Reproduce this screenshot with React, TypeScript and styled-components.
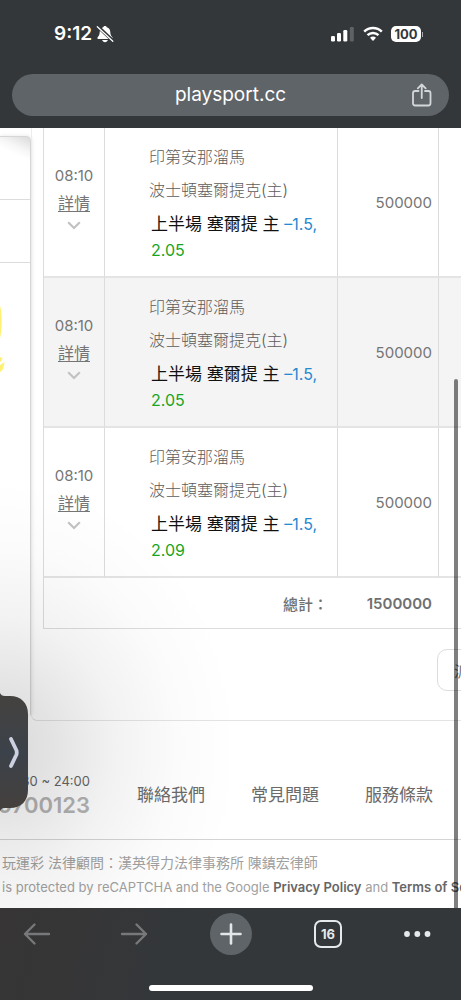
import React from "react";
import styled, { createGlobalStyle } from "styled-components";

const GlobalStyle = createGlobalStyle`
  * { box-sizing: border-box; }
  body { margin: 0; background: #33373a; font-family: Inter, "Noto Sans CJK TC", sans-serif; }
  button { font: inherit; border: 0; padding: 0; background: none; color: inherit; cursor: pointer; }
  svg { display: block; }
`;

const Screen = styled.div`
  min-height: 100vh;
  display: flex;
  flex-direction: column;
  overflow: hidden;
`;

const TopChrome = styled.header`
  background: #33373a;
  color: #fff;
  padding: 0 12px 12px;
`;

const StatusBar = styled.div`
  height: 74px;
  padding: 0 26px 6px 42px;
  display: flex;
  align-items: center;
  justify-content: space-between;
`;

const StatusGroup = styled.div<{ $gap: number }>`
  display: flex;
  align-items: center;
  gap: ${(p) => p.$gap}px;
`;

const Clock = styled.time`
  font-size: 19px;
  font-weight: 600;
  line-height: 24px;
`;

const Battery = styled.div`
  display: flex;
  align-items: center;
  gap: 1px;
  &::after {
    content: "";
    width: 1px;
    height: 5px;
    background: #aaadae;
  }
`;

const BatteryLevel = styled.span`
  width: 30px;
  height: 16px;
  border-radius: 5px;
  background: #fff;
  color: #33373a;
  font-size: 13px;
  font-weight: 700;
  line-height: 16px;
  text-align: center;
`;

const AddressBar = styled.div`
  height: 42px;
  border-radius: 21px;
  background: #5f6468;
  padding: 0 17px;
  display: grid;
  grid-template-columns: 20px 1fr 20px;
  align-items: center;
`;

const Address = styled.button`
  grid-column: 2;
  font-size: 19px;
  line-height: 24px;
`;

const WebPage = styled.main`
  flex: 1;
  position: relative;
  overflow: hidden;
  background: #fff;
`;

const Columns = styled.div`
  display: flex;
`;

const SideCard = styled.aside`
  flex: 0 0 31px;
  margin: 8px 0 6px;
  border-top: 1px solid #d6d6d6;
  border-right: 1px solid #d6d6d6;
  border-top-right-radius: 5px;
  box-shadow: 1px 0 4px rgba(0, 0, 0, 0.1);
  background: linear-gradient(205deg, #dadada 0, #f6f6f6 14px, #fff 22px);
`;

const SideItem = styled.div`
  height: 63px;
  border-bottom: 1px solid #dcdcdc;
`;

const SideArt = styled.svg`
  margin-top: 42px;
`;

const Panel = styled.section`
  flex: 1 0 auto;
  padding: 0 0 29px 11px;
  border-left: 1px solid #ececec;
  border-bottom: 1px solid #e4e4e4;
  border-bottom-left-radius: 6px;
`;

const BetTable = styled.table`
  table-layout: fixed;
  width: 597px;
  border-spacing: 0;
  border-left: 1px solid #dcdcdc;
  color: #757575;
  font-size: 15px;
`;

const BetRow = styled.tr<{ $shaded: boolean }>`
  height: 150px;
  background: ${(p) => (p.$shaded ? "#f4f4f4" : "transparent")};
`;

const Cell = styled.td`
  padding: 0;
  border-right: 1px solid #dcdcdc;
  border-bottom: 2px solid #e4e4e4;
`;

const TimeBox = styled.div`
  padding-bottom: 8px;
  display: flex;
  flex-direction: column;
  align-items: center;
  line-height: 24px;
`;

const DetailLink = styled.a`
  color: inherit;
  font-size: 16px;
  line-height: 30px;
  text-underline-offset: 2px;
`;

const ChevronBox = styled.div`
  height: 14px;
  display: flex;
  align-items: center;
`;

const GameCell = styled(Cell)`
  vertical-align: top;
  padding: 13px 0 0 44px;
  color: #5c5c5c;
  font-size: 16px;
  font-weight: 300;
`;

const Team = styled.div`
  line-height: 33px;
`;

const Pick = styled.div`
  padding: 4px 0 0 2px;
  color: #111;
  font-size: 17px;
  font-weight: 400;
  line-height: 26px;
`;

const PickNumber = styled.span<{ $tone: "handicap" | "odds" }>`
  display: ${(p) => (p.$tone === "odds" ? "block" : "inline")};
  color: ${(p) => (p.$tone === "odds" ? "#17a51f" : "#2489d0")};
  font-size: 16px;
`;

const AmountCell = styled(Cell)`
  padding-right: 6px;
  text-align: right;
`;

const TotalCell = styled.td`
  height: 51px;
  padding: 0 7px 0 0;
  border-bottom: 1px solid #dcdcdc;
  color: #707070;
  font-weight: 600;
  text-align: right;
`;

const TotalLabel = styled(TotalCell)`
  padding-right: 10px;
  font-weight: 500;
`;

const PanelButton = styled.button`
  display: block;
  width: 120px;
  height: 42px;
  margin: 20px 0 0 394px;
  padding-left: 16px;
  border: 1px solid #dcdcdc;
  border-radius: 10px;
  color: #707070;
  font-size: 16px;
  text-align: left;
`;

const FooterTop = styled.div`
  display: flex;
  align-items: center;
  gap: 47px;
  padding: 48px 0 22px;
  border-bottom: 1px solid #d4d4d4;
`;

const Contact = styled.div`
  flex: 0 0 90px;
  min-width: 0;
  display: flex;
  flex-direction: column;
  align-items: flex-end;
  line-height: 24px;
  white-space: nowrap;
`;

const Hours = styled.span`
  color: #666;
  font-size: 13px;
`;

const Phone = styled.span`
  color: #b4b4b4;
  font-size: 22px;
  font-weight: 600;
`;

const FooterNav = styled.nav`
  display: flex;
  gap: 46px;
  font-size: 17px;
  white-space: nowrap;
  a { color: #6a6a6a; text-decoration: none; }
`;

const Legal = styled.div`
  padding: 10px 0 8px 2px;
  color: #a0a0a0;
  font-size: 13px;
  line-height: 25px;
  white-space: nowrap;
  a { color: #666; font-weight: 600; text-decoration: none; }
`;

const Counsel = styled.div`
  font-size: 14px;
`;

const Haze = styled.div`
  position: absolute;
  inset: 0;
  pointer-events: none;
  background: radial-gradient(
    240px 270px at 0 620px,
    rgba(0, 0, 0, 0.15) 0,
    rgba(0, 0, 0, 0.11) 22%,
    rgba(0, 0, 0, 0.05) 48%,
    rgba(0, 0, 0, 0.015) 74%,
    transparent 100%
  );
`;

const ScrollThumb = styled.div`
  position: absolute;
  top: 251px;
  right: 3px;
  bottom: 0;
  width: 4px;
  border-radius: 2px 2px 0 0;
  background: rgba(0, 0, 0, 0.5);
`;

const Drawer = styled.button`
  position: absolute;
  left: 0;
  top: 565px;
`;

const BottomChrome = styled.footer`
  background: linear-gradient(105deg, #373536 0, #363637 80px, #33373a 190px);
  height: 92px;
  display: flex;
  flex-direction: column;
  align-items: center;
`;

const Toolbar = styled.nav`
  width: 100%;
  padding: 5px 15px 0 16px;
  display: flex;
  justify-content: space-between;
`;

const ToolButton = styled.button<{ $fill?: boolean; $start?: boolean }>`
  width: 42px;
  height: 42px;
  border-radius: 50%;
  display: flex;
  align-items: center;
  justify-content: ${(p) => (p.$start ? "flex-start" : "center")};
  background: ${(p) => (p.$fill ? "#5f6468" : "none")};
`;

const TabCount = styled.span`
  width: 28px;
  height: 28px;
  border: 2px solid #e6e9eb;
  border-radius: 7px;
  color: #e6e9eb;
  font-size: 13px;
  font-weight: 700;
  line-height: 24px;
  text-align: center;
`;

const HomeIndicator = styled.div`
  width: 164px;
  height: 6px;
  margin-top: 30px;
  flex: none;
  border-radius: 3px;
  background: #fff;
`;

const BellOff = () => (
  <svg width="18" height="18" viewBox="0 0 18 18" aria-hidden="true">
    <path d="M9 1C8 1 7.400 1.600 7.200 2.300C4.800 3 3.800 4.900 3.700 7.200C3.600 10.100 2.700 10.800 1.800 11.900C1 12.900 1.500 14 2.700 14H15.300C16.500 14 17 12.900 16.200 11.900C15.300 10.800 14.400 10.100 14.300 7.200C14.200 4.900 13.200 3 10.800 2.300C10.600 1.600 10 1 9 1Z" fill="#fff" />
    <path d="M6.200 15H11.800C11.400 16.400 10.400 17.200 9 17.200S6.600 16.400 6.200 15Z" fill="#fff" />
    <path d="M1.500 1.200L17.200 16" stroke="#33373a" strokeWidth="3.400" />
    <path d="M1.300 1.800L16.800 16.300" stroke="#fff" strokeWidth="1.300" strokeLinecap="round" />
  </svg>
);

const Signal = () => (
  <svg width="24" height="16" viewBox="0 0 24 16" aria-hidden="true">
    <g fill="#fff">
      <rect x="0" y="10" width="4" height="5.500" rx="1.200" />
      <rect x="6" y="7" width="4" height="8.500" rx="1.200" />
      <rect x="12.300" y="4" width="4" height="11.500" rx="1.200" />
      <rect x="18.800" y="1" width="4" height="14.500" rx="1.200" opacity=".22" />
    </g>
  </svg>
);

const Wifi = () => (
  <svg width="20" height="16" viewBox="0 0 20 16" aria-hidden="true">
    <g fill="none" stroke="#fff" strokeWidth="2.500">
      <path d="M1.200 5.600C6.100 .9 13.900 .9 18.800 5.600" />
      <path d="M4.500 9.200C7.600 6.300 12.400 6.300 15.500 9.200" />
    </g>
    <path d="M7 11.700C8.700 10.200 11.300 10.200 13 11.700L10 14.900Z" fill="#fff" />
  </svg>
);

const Share = () => (
  <svg width="20" height="24" viewBox="0 0 20 24" fill="none" stroke="#d4d7d9" strokeWidth="1.800" strokeLinecap="round" strokeLinejoin="round" aria-hidden="true">
    <path d="M6.500 8H3.200C1.900 8 1 8.900 1 10.200V20.300C1 21.600 1.900 22.500 3.200 22.500H16.300C17.600 22.500 18.500 21.600 18.500 20.300V10.200C18.500 8.900 17.600 8 16.300 8H13" />
    <path d="M9.750 15V1.700M5.800 5.400L9.750 1.500L13.700 5.400" />
  </svg>
);

const Arrow = ({ forward }: { forward?: boolean }) => (
  <svg width="28" height="24" viewBox="0 0 28 24" fill="none" stroke="#76787a" strokeWidth="2.400" strokeLinecap="round" strokeLinejoin="round" aria-hidden="true">
    <path d={forward ? "M2 12H26M16.500 2.500L26 12L16.500 21.500" : "M26 12H2M11.500 2.500L2 12L11.500 21.500"} />
  </svg>
);

const bets = [
  { odds: "2.05", shaded: false },
  { odds: "2.05", shaded: true },
  { odds: "2.09", shaded: false },
];

export default function App() {
  return (
    <Screen>
      <GlobalStyle />
      <TopChrome>
        <StatusBar>
          <StatusGroup $gap={4}>
            <Clock>9:12</Clock>
            <BellOff />
          </StatusGroup>
          <StatusGroup $gap={8}>
            <Signal />
            <Wifi />
            <Battery>
              <BatteryLevel>100</BatteryLevel>
            </Battery>
          </StatusGroup>
        </StatusBar>
        <AddressBar>
          <Address type="button">playsport.cc</Address>
          <button type="button" aria-label="Share">
            <Share />
          </button>
        </AddressBar>
      </TopChrome>

      <WebPage>
        <Columns>
          <SideCard>
            <SideItem />
            <SideItem />
            <SideArt width="6" height="70" viewBox="0 0 6 70" aria-hidden="true">
              <path d="M0 1C2.200 6 2.200 26 0 33Z" fill="#fff176" />
              <path d="M0 52L2.500 53L1.500 56L0 57ZM0 60L4.500 57C4 63 2.500 66 0 67Z" fill="#fff176" />
            </SideArt>
          </SideCard>
          <Panel>
            <BetTable>
              <colgroup>
                <col style={{ width: 61 }} />
                <col style={{ width: 233 }} />
                <col style={{ width: 101 }} />
                <col />
              </colgroup>
              <tbody>
                {bets.map((bet, i) => (
                  <BetRow key={i} $shaded={bet.shaded}>
                    <Cell>
                      <TimeBox>
                        <span>08:10</span>
                        <DetailLink href="#">詳情</DetailLink>
                        <ChevronBox>
                          <svg width="14" height="9" viewBox="0 0 14 9" fill="none" stroke="#c2c2c2" strokeWidth="2.200" aria-hidden="true">
                            <path d="M1.200 1.200L7 7L12.800 1.200" />
                          </svg>
                        </ChevronBox>
                      </TimeBox>
                    </Cell>
                    <GameCell>
                      <Team>印第安那溜馬</Team>
                      <Team>波士頓塞爾提克(主)</Team>
                      <Pick>
                        上半場 塞爾提 主 <PickNumber $tone="handicap">–1.5,</PickNumber>
                        <PickNumber $tone="odds">{bet.odds}</PickNumber>
                      </Pick>
                    </GameCell>
                    <AmountCell>500000</AmountCell>
                    <Cell />
                  </BetRow>
                ))}
                <tr>
                  <TotalLabel colSpan={2}>總計：</TotalLabel>
                  <TotalCell>1500000</TotalCell>
                  <TotalCell />
                </tr>
              </tbody>
            </BetTable>
            <PanelButton type="button">派</PanelButton>
          </Panel>
        </Columns>

        <FooterTop>
          <Contact>
            <Hours>08:30 ~ 24:00</Hours>
            <Phone>0700123</Phone>
          </Contact>
          <FooterNav>
            <a href="#">聯絡我們</a>
            <a href="#">常見問題</a>
            <a href="#">服務條款</a>
          </FooterNav>
        </FooterTop>
        <Legal>
          <Counsel>玩運彩 法律顧問：漢英得力法律事務所 陳鎮宏律師</Counsel>
          <div>
            is protected by reCAPTCHA and the Google <a href="#">Privacy Policy</a> and <a href="#">Terms of Service</a>
          </div>
        </Legal>

        <Haze />
        <ScrollThumb />
        <Drawer type="button" aria-label="Open drawer">
          <svg width="29" height="120" viewBox="0 0 29 120" aria-hidden="true">
            <defs>
              <linearGradient id="drawerFill" x1="0" y1="0" x2="0" y2="1">
                <stop offset="0" stopColor="#45423f" />
                <stop offset=".5" stopColor="#3c424a" />
                <stop offset="1" stopColor="#45403d" />
              </linearGradient>
            </defs>
            <path d="M0 0C1 2 2 3 5 3H10C21 3 28 10 28 21V97C28 108 21 115 10 115H5C2 115 1 116 0 118Z" fill="url(#drawerFill)" />
            <path d="M11 46L16.500 57.500Q17 59.500 16.500 61.500L11 73" fill="none" stroke="#ccd0e0" strokeWidth="3.800" strokeLinecap="round" strokeLinejoin="round" />
          </svg>
        </Drawer>
      </WebPage>

      <BottomChrome>
        <Toolbar aria-label="Browser">
          <ToolButton type="button" aria-label="Back">
            <Arrow />
          </ToolButton>
          <ToolButton type="button" aria-label="Forward">
            <Arrow forward />
          </ToolButton>
          <ToolButton type="button" aria-label="New tab" $fill>
            <svg width="22" height="22" viewBox="0 0 22 22" stroke="#e3e6e8" strokeWidth="2.600" strokeLinecap="round" aria-hidden="true">
              <path d="M11 1.500V20.500M1.500 11H20.500" />
            </svg>
          </ToolButton>
          <ToolButton type="button" aria-label="Tabs">
            <TabCount>16</TabCount>
          </ToolButton>
          <ToolButton type="button" aria-label="More" $start>
            <svg width="28" height="6" viewBox="0 0 28 6" fill="#e6e9eb" aria-hidden="true">
              <circle cx="3" cy="3" r="2.900" />
              <circle cx="13.300" cy="3" r="2.900" />
              <circle cx="23.500" cy="3" r="2.900" />
            </svg>
          </ToolButton>
        </Toolbar>
        <HomeIndicator />
      </BottomChrome>
    </Screen>
  );
}
